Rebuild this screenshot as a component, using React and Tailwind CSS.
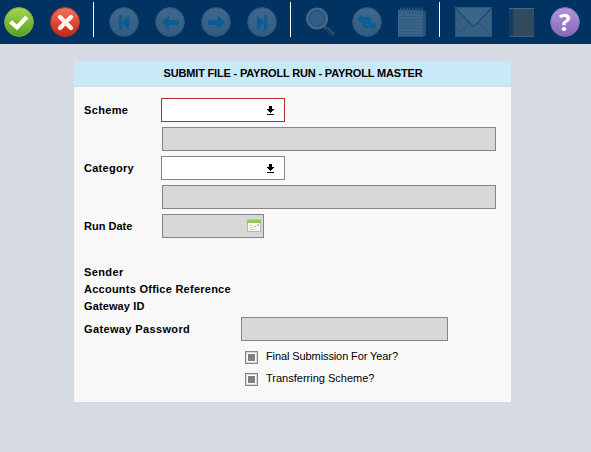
import React from "react";

function Round({ id, top, bottom, rim, children, label }) {
  return (
    <button aria-label={label} className="block size-[30px] shrink-0">
      <svg viewBox="0 0 30 30" className="block size-[30px] overflow-visible">
        <defs>
          <linearGradient id={id} x1="0" y1="0" x2="0" y2="1">
            <stop offset="0" stopColor={top} />
            <stop offset="1" stopColor={bottom} />
          </linearGradient>
        </defs>
        <circle cx="15" cy="15" r="14.4" fill={`url(#${id})`} stroke={rim} strokeWidth="1" />
        {children}
      </svg>
    </button>
  );
}

function NavRound({ id, label, children }) {
  return (
    <Round id={id} label={label} top="#42698c" bottom="#305b82" rim="#2c557d">
      <g fill="#0a5d94">{children}</g>
    </Round>
  );
}

function Divider() {
  return <div className="-mt-[5px] h-[35px] w-px shrink-0 bg-white" />;
}

function Toolbar() {
  return (
    <header className="flex h-11 items-start bg-[#003262] pt-[7px] pl-1">
      <div className="flex gap-4">
        <Round id="ok" label="Submit" top="#a6d552" bottom="#55a11c" rim="#78ad3f">
          <path d="M5 16.3 L8 13.3 L12.8 17.5 L21.3 8.5 L24.5 11.5 L13.2 23.2 Z" fill="#fff" />
        </Round>
        <Round id="cancel" label="Cancel" top="#f1745b" bottom="#c92211" rim="#c13a2c">
          <path d="M10 10 L21 21 M21 10 L10 21" stroke="#fff1ec" strokeWidth="4.4" strokeLinecap="round" />
        </Round>
      </div>
      <div className="ml-[13px]"><Divider /></div>
      <div className="ml-[15px] flex gap-4">
        <NavRound id="first" label="First">
          <rect x="10" y="8" width="3.2" height="15" rx="1" />
          <path d="M20 8 V23 L12.5 15.5 Z" />
        </NavRound>
        <NavRound id="prev" label="Previous">
          <path d="M6.5 15.5 L14 8.5 V13 H22.7 Q24 13 24 14.2 V16.8 Q24 18 22.7 18 H14 V22.5 Z" />
        </NavRound>
        <NavRound id="next" label="Next">
          <path d="M24 15.5 L16.5 8.5 V13 H8.3 Q7 13 7 14.2 V16.8 Q7 18 8.3 18 H16.5 V22.5 Z" />
        </NavRound>
        <NavRound id="last" label="Last">
          <rect x="17" y="8" width="3.2" height="15" rx="1" />
          <path d="M10 8 V23 L17.5 15.5 Z" />
        </NavRound>
      </div>
      <div className="ml-[13px]"><Divider /></div>
      <svg viewBox="0 0 31 30" className="ml-[14px] h-[30px] w-[31px] shrink-0">
        <path d="M19 19 L22 22" stroke="#31566f" strokeWidth="3" />
        <path d="M22 21.5 L29 28" stroke="#203f5b" strokeWidth="4.6" />
        <path d="M22.5 21 L29 27" stroke="#345268" strokeWidth="1.3" />
        <circle cx="12" cy="11.5" r="9.6" fill="#2e5a85" stroke="#406788" strokeWidth="3" />
        <circle cx="12" cy="11.5" r="7.8" fill="#315d87" stroke="#1c4a76" strokeWidth="0.8" />
      </svg>
      <div className="ml-4">
        <NavRound id="swap" label="Swap">
          <path d="M5 12 L10 7.5 V10 H16.5 Q19.5 10 19.5 13 V16.5 H20.5 V14.5 L25 19 L20.5 23.5 V21 H13.5 Q10.5 21 10.5 18 V14.5 H10 V16.5 Z" />
          <path d="M12.5 14 H15.5 M14.5 17.3 H17.5" stroke="#3b6589" strokeWidth="1.2" />
        </NavRound>
      </div>
      <svg viewBox="0 0 28 30" className="ml-4 h-[30px] w-7 shrink-0">
        <path d="M0 3 H25 L28 5 V28 L26 30 H0 Z" fill="#285277" />
        <path d="M0 3 H25 V29 H0 Z" fill="#3a658a" />
        <path d="M1 6.5 H25 M1 9.5 H25 M1 12.5 H25 M1 15.5 H25 M1 18.5 H25 M1 21.5 H25 M1 24.5 H25 M1 27.5 H25" stroke="#2f5c83" strokeWidth="1" />
        <path d="M3 0.5 V4 M6 0.5 V4 M9 0.5 V4 M12 0.5 V4 M15 0.5 V4 M18 0.5 V4 M21 0.5 V4 M24 0.5 V4" stroke="#416481" strokeWidth="1.2" />
        <path d="M2 4 H25" stroke="#1c4670" strokeWidth="1" strokeDasharray="1.5 1.5" />
      </svg>
      <div className="ml-[13px]"><Divider /></div>
      <svg viewBox="0 0 37 30" className="ml-[15px] h-[30px] w-[37px] shrink-0">
        <rect x="0.5" y="0.5" width="36" height="29" fill="#365f84" stroke="#2b567d" />
        <path d="M1 28.5 L14.5 15.5 M36 28.5 L22.5 15.5" stroke="#27517a" strokeWidth="1" fill="none" />
        <path d="M1 1 L17 18.5 Q18.5 20 20 18.5 L36 1 Z" fill="#3b6589" />
        <path d="M1 1.5 L17 18.5 Q18.5 20 20 18.5 L36 1.5" fill="none" stroke="#1e4872" strokeWidth="1.1" />
      </svg>
      <svg viewBox="0 0 25 30" className="ml-[17px] h-[30px] w-[25px] shrink-0">
        <defs>
          <linearGradient id="book" x1="0" y1="0" x2="0" y2="1">
            <stop offset="0" stopColor="#2f4c60" />
            <stop offset="1" stopColor="#34495c" />
          </linearGradient>
        </defs>
        <rect x="0" y="1" width="25" height="29" fill="url(#book)" />
        <rect x="0" y="2" width="4" height="27" fill="#153c61" />
        <rect x="4" y="2" width="1" height="27" fill="#24445f" />
        <path d="M0 1.5 H25" stroke="#48687f" />
        <path d="M1 29.5 H25" stroke="#425a70" />
      </svg>
      <div className="ml-4">
        <Round id="help" label="Help" top="#b09ada" bottom="#8864bb" rim="#8170b4">
          <text x="14.8" y="23.5" textAnchor="middle" fill="#fff" className="font-['Open_Sans',sans-serif] text-[24px] leading-none font-bold">?</text>
        </Round>
      </div>
    </header>
  );
}

function Select({ label, invalid }) {
  return (
    <button
      aria-label={label}
      className={`-ml-px flex h-6 w-[124px] items-center justify-end border bg-white pr-[10px] ${invalid ? "border-[#b22e2e]" : "border-[#858585]"}`}
    >
      <svg viewBox="0 0 7 9" shapeRendering="crispEdges" className="mt-px h-[9px] w-[7px]">
        <path d="M2 0 H5 V3 H7 V4 H6 V5 H5 V6 H4 V7 H3 V6 H2 V5 H1 V4 H0 V3 H2 Z M0 8 H7 V9 H0 Z" />
      </svg>
    </button>
  );
}

function Label({ children }) {
  return <div className="w-[78px] shrink-0 leading-6">{children}</div>;
}

function ReadOnly({ className }) {
  return <div className={`h-6 border border-[#858585] bg-[#d8d8d8] ${className}`} />;
}

function Check({ children }) {
  return (
    <label className="flex h-[22px] items-start">
      <span className="flex size-[13px] items-center justify-center border border-[#858585] bg-white">
        <span className="flex size-[11px] items-center justify-center border border-[#d8d8d8]">
          <span className="size-[7px] bg-[#808080]" />
        </span>
      </span>
      <span className="-mt-px ml-2 text-[11px] leading-[13px] font-normal">{children}</span>
    </label>
  );
}

function CalendarIcon() {
  return (
    <svg viewBox="0 0 14 13" className="mb-0.5 h-[13px] w-[14px]">
      <rect x="0.5" y="1.5" width="13" height="11" rx="0.5" fill="#fafaf8" stroke="#a9bfae" />
      <rect x="0" y="0" width="14" height="4" rx="0.8" fill="#98c858" />
      <rect x="0" y="0" width="14" height="1" fill="#b8d784" />
      <path d="M2 6.5 H5 M2 8.5 H6 M3 10.5 H9 M10 5.5 H12" stroke="#d4d4d4" />
      <path d="M7 7.5 H9 M10 6.5 H12" stroke="#e99c52" strokeWidth="1.2" />
    </svg>
  );
}

export default function App() {
  return (
    <div className="h-[452px] w-[591px] bg-[#d6dbe3] font-['Liberation_Sans',Arial,sans-serif] text-[11px] font-bold text-black">
      <Toolbar />
      <main className="mt-[17px] ml-[74px] w-[437px]">
        <h1 className="h-6 bg-[#c9e9f9] pl-px text-center leading-6 tracking-[-0.17px]">SUBMIT FILE - PAYROLL RUN - PAYROLL MASTER</h1>
        <div className="h-0.5 bg-[#d4dee7]" />
        <form className="h-[315px] bg-[#f9f8f9] pt-[11px] pl-[10px]">
          <div className="flex flex-col gap-[5px]">
            <div className="flex"><Label><span className="tracking-[0.35px]">Scheme</span></Label><Select label="Scheme" invalid /></div>
            <ReadOnly className="ml-[78px] w-[334px]" />
            <div className="flex"><Label><span className="tracking-[0.27px]">Category</span></Label><Select label="Category" /></div>
            <ReadOnly className="ml-[78px] w-[334px]" />
            <div className="flex">
              <Label>Run Date</Label>
              <div className="flex h-6 w-[102px] items-center justify-end border border-[#858585] bg-[#d8d8d8] pr-0.5">
                <CalendarIcon />
              </div>
            </div>
          </div>
          <div className="mt-[26px] leading-[17px]">
            <p className="tracking-[0.4px]">Sender</p>
            <p className="tracking-[0.25px]">Accounts Office Reference</p>
            <p className="tracking-[0.12px]">Gateway ID</p>
          </div>
          <div className="mt-0.5 flex">
            <div className="w-[157px] leading-6 tracking-[0.37px]">Gateway Password</div>
            <ReadOnly className="w-[207px]" />
          </div>
          <div className="mt-[10px] ml-[161px]">
            <Check><span className="tracking-[-0.1px]">Final Submission For Year?</span></Check>
            <Check>Transferring Scheme?</Check>
          </div>
        </form>
      </main>
    </div>
  );
}
